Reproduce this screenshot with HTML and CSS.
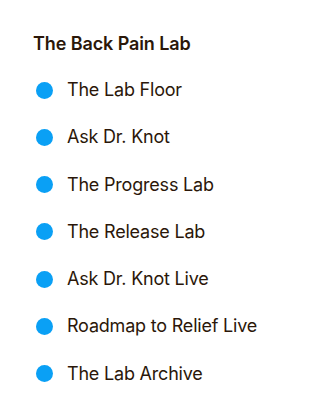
FILE: index.html
```html
<!DOCTYPE html>
<html lang="en">

<head>
    <meta charset="utf-8">
    <meta name="viewport" content="width=device-width, initial-scale=1.0">
    <title>The Back Pain Lab</title>
    <link rel="stylesheet" href="styles.css">
</head>

<body>
    <nav class="lab-nav">
        <h2 class="lab-titel">The Back Pain Lab</h2>
        <ul class="lab-liste">
            <li><span class="prik"></span>The Lab Floor</li>
            <li><span class="prik"></span>Ask Dr. Knot</li>
            <li><span class="prik"></span>The Progress Lab</li>
            <li><span class="prik"></span>The Release Lab</li>
            <li><span class="prik"></span>Ask Dr. Knot Live</li>
            <li><span class="prik"></span>Roadmap to Relief Live</li>
            <li><span class="prik"></span>The Lab Archive</li>
        </ul>
    </nav>
</body>

</html>
```

FILE: styles.css
```css
body {
    margin: 0;
    background-color: white;
    font-family: Inter, "Noto Sans", sans-serif;
    color: #2b1709;
}

.lab-nav {
    padding: 32px 0 0 33px;
}

.lab-titel {
    margin: 0;
    font-size: 18px;
    font-weight: 600;
    line-height: 24px;
    letter-spacing: -0.1px;
}

.lab-liste {
    list-style: none;
    margin: 22px 0 0 0;
    padding: 0 0 0 3px;
    display: flex;
    flex-direction: column;
    gap: 23.3px;
}

.lab-liste li {
    display: flex;
    align-items: center;
    gap: 14px;
    font-size: 18px;
    line-height: 24px;
    letter-spacing: -0.2px;
}

.prik {
    width: 17px;
    height: 17px;
    border-radius: 50%;
    background-color: #0aa0f5;
    flex-shrink: 0;
}
```
